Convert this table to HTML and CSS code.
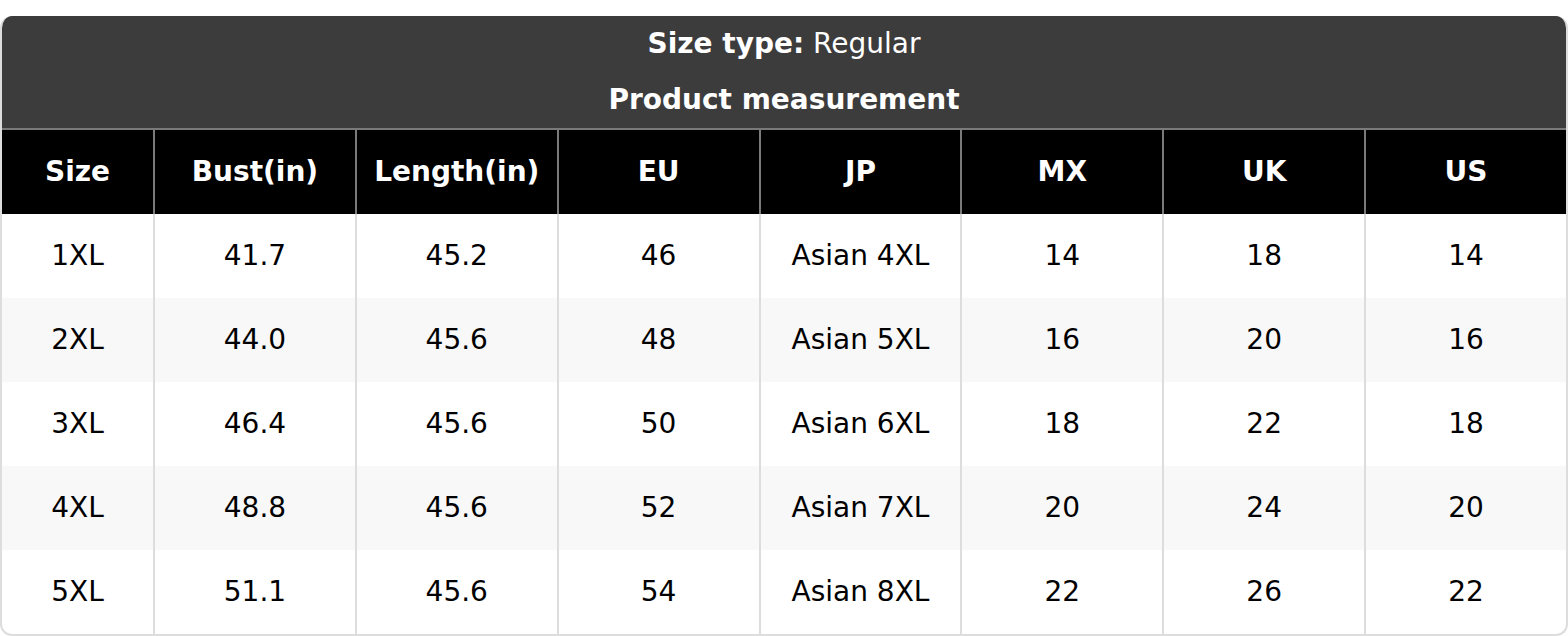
FILE: index.html
```html
<!DOCTYPE html>
<html lang="en">
<head>
<meta charset="utf-8">
<title>Size chart</title>
<link rel="stylesheet" href="styles.css">
</head>
<body>
<div class="chart">
  <div class="chart-head">
    <div class="head-line"><b>Size type:</b>&nbsp;Regular</div>
    <div class="head-line"><b>Product measurement</b></div>
  </div>
  <table class="sizes">
    <thead>
      <tr><th>Size</th><th>Bust(in)</th><th>Length(in)</th><th>EU</th><th>JP</th><th>MX</th><th>UK</th><th>US</th></tr>
    </thead>
    <tbody>
      <tr><td>1XL</td><td>41.7</td><td>45.2</td><td>46</td><td>Asian 4XL</td><td>14</td><td>18</td><td>14</td></tr>
      <tr><td>2XL</td><td>44.0</td><td>45.6</td><td>48</td><td>Asian 5XL</td><td>16</td><td>20</td><td>16</td></tr>
      <tr><td>3XL</td><td>46.4</td><td>45.6</td><td>50</td><td>Asian 6XL</td><td>18</td><td>22</td><td>18</td></tr>
      <tr><td>4XL</td><td>48.8</td><td>45.6</td><td>52</td><td>Asian 7XL</td><td>20</td><td>24</td><td>20</td></tr>
      <tr><td>5XL</td><td>51.1</td><td>45.6</td><td>54</td><td>Asian 8XL</td><td>22</td><td>26</td><td>22</td></tr>
    </tbody>
  </table>
</div>
</body>
</html>
```
FILE: styles.css
```css
html, body {
  margin: 0;
  padding: 0;
  background: #fff;
}
body {
  font-family: "DejaVu Sans", Verdana, sans-serif;
  font-size: 28px;
  color: #000;
}
.chart {
  margin-top: 16px;
  border: 2px solid #dddddd;
  border-top: none;
  border-radius: 12px;
  overflow: hidden;
}
.chart-head {
  background: #3c3c3c;
  color: #fff;
  margin: 0 -2px;
}
.head-line {
  height: 54px;
  padding-bottom: 2px;
  display: flex;
  align-items: center;
  justify-content: center;
  white-space: pre;
}
.sizes {
  width: 100%;
  table-layout: fixed;
  border-collapse: separate;
  border-spacing: 0;
}
.sizes th,
.sizes td {
  padding: 0 0 2px;
  height: 82px;
  text-align: center;
  vertical-align: middle;
  border-left: 2px solid #dddddd;
}
.sizes th {
  background: #000;
  color: #fff;
  font-weight: bold;
  border-top: 2px solid #7a7a7a;
  border-left-color: #7a7a7a;
}
.sizes th:first-child,
.sizes td:first-child {
  border-left: none;
  width: 151px;
}
.sizes tbody tr:nth-child(even) td {
  background: #f8f8f8;
}
```
